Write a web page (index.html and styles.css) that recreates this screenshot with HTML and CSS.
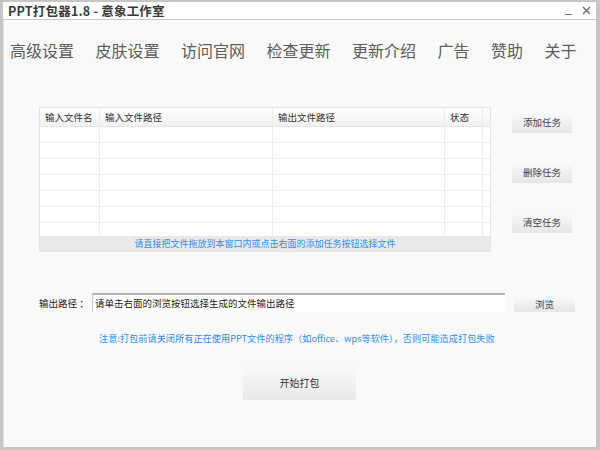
FILE: index.html
```html
<!DOCTYPE html>
<html lang="zh">
<head>
<meta charset="utf-8">
<link rel="stylesheet" href="styles.css">
</head>
<body>
<div class="window">
  <div class="titlebar">
    <span class="title">PPT打包器1.8 - 意象工作室</span>
    <span class="controls"><span class="min"></span><svg class="close" width="9" height="9" viewBox="0 0 9 9"><path d="M1 1L8 8M8 1L1 8" stroke="#666" stroke-width="1.3" fill="none"/></svg></span>
  </div>
  <div class="content">
    <nav class="nav">
      <span>高级设置</span><span>皮肤设置</span><span>访问官网</span><span>检查更新</span><span>更新介绍</span><span>广告</span><span>赞助</span><span>关于</span>
    </nav>
    <div class="row-tasks">
      <div class="table">
        <div class="thead">
          <div class="c c1">输入文件名</div><div class="c c2">输入文件路径</div><div class="c c3">输出文件路径</div><div class="c c4">状态</div><div class="c c5"></div>
        </div>
        <div class="tbody">
          <div class="tr"><div class="c c1"></div><div class="c c2"></div><div class="c c3"></div><div class="c c4"></div><div class="c c5"></div></div>
          <div class="tr"><div class="c c1"></div><div class="c c2"></div><div class="c c3"></div><div class="c c4"></div><div class="c c5"></div></div>
          <div class="tr"><div class="c c1"></div><div class="c c2"></div><div class="c c3"></div><div class="c c4"></div><div class="c c5"></div></div>
          <div class="tr"><div class="c c1"></div><div class="c c2"></div><div class="c c3"></div><div class="c c4"></div><div class="c c5"></div></div>
          <div class="tr"><div class="c c1"></div><div class="c c2"></div><div class="c c3"></div><div class="c c4"></div><div class="c c5"></div></div>
          <div class="tr"><div class="c c1"></div><div class="c c2"></div><div class="c c3"></div><div class="c c4"></div><div class="c c5"></div></div>
          <div class="tr last"><div class="c c1"></div><div class="c c2"></div><div class="c c3"></div><div class="c c4"></div><div class="c c5"></div></div>
        </div>
        <div class="tfoot">请直接把文件拖放到本窗口内或点击右面的添加任务按钮选择文件</div>
      </div>
      <div class="side-buttons">
        <button class="btn">添加任务</button>
        <button class="btn">删除任务</button>
        <button class="btn">清空任务</button>
      </div>
    </div>
    <div class="row-output">
      <span class="label">输出路径 ：</span>
      <div class="path-input">请单击右面的浏览按钮选择生成的文件输出路径</div>
      <button class="btn btn-browse">浏览</button>
    </div>
    <p class="note">注意:打包前请关闭所有正在使用PPT文件的程序（如office、wps等软件），否则可能造成打包失败</p>
    <div class="row-start">
      <button class="btn btn-start">开始打包</button>
    </div>
  </div>
</div>
</body>
</html>
```

FILE: styles.css
```css
* { box-sizing: border-box; }
html, body { margin: 0; padding: 0; }
body {
  width: 600px;
  height: 450px;
  background: #c4c4c4;
  font-family: "Noto Sans CJK SC", "Noto Sans", sans-serif;
  overflow: hidden;
}
.window {
  width: 600px;
  height: 450px;
  border-style: solid;
  border-color: #c6c6c6;
  border-width: 2px 4px 3px 3px;
  display: flex;
  flex-direction: column;
  background: #f9f9f9;
}
.titlebar {
  height: 18px;
  background: #ffffff;
  border-bottom: 1px solid #c8c8c8;
  display: flex;
  align-items: center;
  justify-content: space-between;
  padding: 0 5px 0 5px;
}
.title {
  font-size: 12.5px;
  font-weight: bold;
  color: #3a3a3a;
  line-height: 16px;
  letter-spacing: 0.2px;
}
.controls {
  display: flex;
  align-items: center;
  gap: 10px;
}
.min {
  width: 7px;
  height: 1px;
  background: #777;
  margin-top: 8px;
}
.close {
  display: block;
}
.content {
  flex: 1;
  display: flex;
  flex-direction: column;
  background: #f9f9f9;
  border-left: 1px solid #e2e2e2;
}
.nav {
  height: 59px;
  display: flex;
  align-items: center;
  gap: 21.5px;
  padding-left: 6px;
  font-size: 16px;
  color: #5c5c5c;
}
.row-tasks {
  display: flex;
  align-items: flex-start;
  margin-top: 28px;
  padding-left: 35px;
}
.table {
  width: 452px;
  border: 1px solid #e4e4e4;
  background: #fff;
  font-size: 9.5px;
  color: #333;
}
.thead, .tr {
  display: flex;
}
.thead {
  height: 19px;
  background: linear-gradient(#ffffff, #f1f1f1);
  border-bottom: 1px solid #e4e4e4;
}
.thead .c {
  line-height: 18px;
  padding-left: 5px;
  white-space: nowrap;
}
.c { border-right: 1px solid #ececec; }
.c1 { width: 60px; }
.c2 { width: 173px; }
.c3 { width: 172px; }
.c4 { width: 38px; }
.c5 { flex: 1; border-right: none; }
.tbody {
  height: 109px;
  overflow: hidden;
}
.tr {
  height: 16px;
  border-bottom: 1px solid #efefef;
}
.tr.last { border-bottom: none; }
.tfoot {
  height: 15px;
  background: #e9e9e9;
  color: #2e8ff0;
  text-align: center;
  line-height: 15px;
  font-size: 9px;
}
.side-buttons {
  display: flex;
  flex-direction: column;
  gap: 28px;
  margin-left: 21px;
  padding-top: 4px;
}
.btn {
  width: 60px;
  height: 22px;
  border: none;
  background: linear-gradient(#fbfbfb, #e6e6e6);
  font-family: inherit;
  font-size: 9.5px;
  color: #444;
  padding: 0;
  cursor: default;
}
.row-output {
  display: flex;
  align-items: center;
  margin-top: 41px;
  padding-left: 35px;
}
.label {
  width: 53px;
  font-size: 9.5px;
  color: #222;
}
.path-input {
  width: 413px;
  height: 19px;
  background: #fff;
  border-top: 2px solid #b4b4b4;
  border-left: 1px solid #c8c8c8;
  font-size: 9.5px;
  color: #222;
  line-height: 16px;
  padding-left: 2px;
}
.btn-browse {
  width: 61px;
  height: 17px;
  margin-left: 9px;
  margin-top: 2px;
}
.note {
  margin: 19px 0 0 95px;
  font-size: 9.2px;
  color: #2e8ff0;
  line-height: 14px;
}
.row-start {
  margin-top: 20px;
  padding-left: 239px;
}
.btn-start {
  width: 113px;
  height: 35px;
  background: linear-gradient(#f9f9f9, #e9e9e9);
  font-size: 10px;
  color: #333;
}
```
